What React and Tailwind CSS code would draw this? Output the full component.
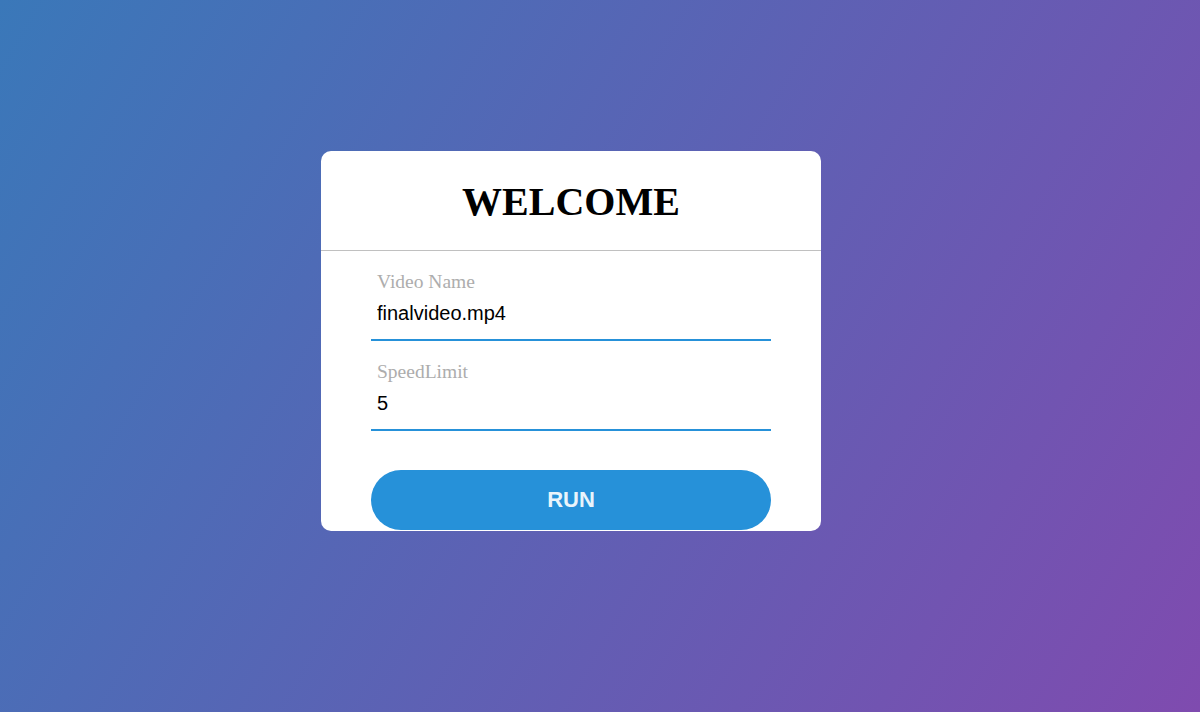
import React, { useState } from 'react';

function Field({ label, value, onChange }) {
    return (
        <div className="mt-[21px] border-b-2 border-[#2691d9] pb-[6px]">
            <label className="block px-[6px] h-[20px] leading-[20px] text-[19.5px] text-[#adadad] font-['Liberation_Serif',serif]">
                {label}
            </label>
            <input
                type="text"
                value={value}
                onChange={(e) => onChange(e.target.value)}
                className="mt-[1px] block w-full h-[40px] px-[6px] text-[20px] text-black bg-transparent border-none outline-none font-['Liberation_Sans',sans-serif]"
            />
        </div>
    );
}

export default function App() {
    const [videoName, setVideoName] = useState('finalvideo.mp4');
    const [speedLimit, setSpeedLimit] = useState('5');

    return (
        <div className="h-[712px] w-full flex items-center justify-center pb-[30px] pr-[58px] bg-[linear-gradient(120deg,#3a78b9,#7f4baf)]">
            <div className="w-[500px] bg-white rounded-[10px] pb-[1px]">
                <h1 className="pt-[28px] pb-[25px] border-b border-[#c0c0c0] text-center text-[40px] leading-[46px] font-bold text-black font-['Liberation_Serif',serif]">
                    WELCOME
                </h1>
                <form className="px-[50px]" onSubmit={(e) => e.preventDefault()}>
                    <Field label="Video Name" value={videoName} onChange={setVideoName} />
                    <Field label="SpeedLimit" value={speedLimit} onChange={setSpeedLimit} />
                    <button
                        type="submit"
                        className="mt-[39px] w-full h-[60px] rounded-full bg-[#2691d9] text-[#e9f4fb] text-[22px] font-bold pb-[2px] font-['Liberation_Sans',sans-serif]"
                    >
                        RUN
                    </button>
                </form>
            </div>
        </div>
    );
}
